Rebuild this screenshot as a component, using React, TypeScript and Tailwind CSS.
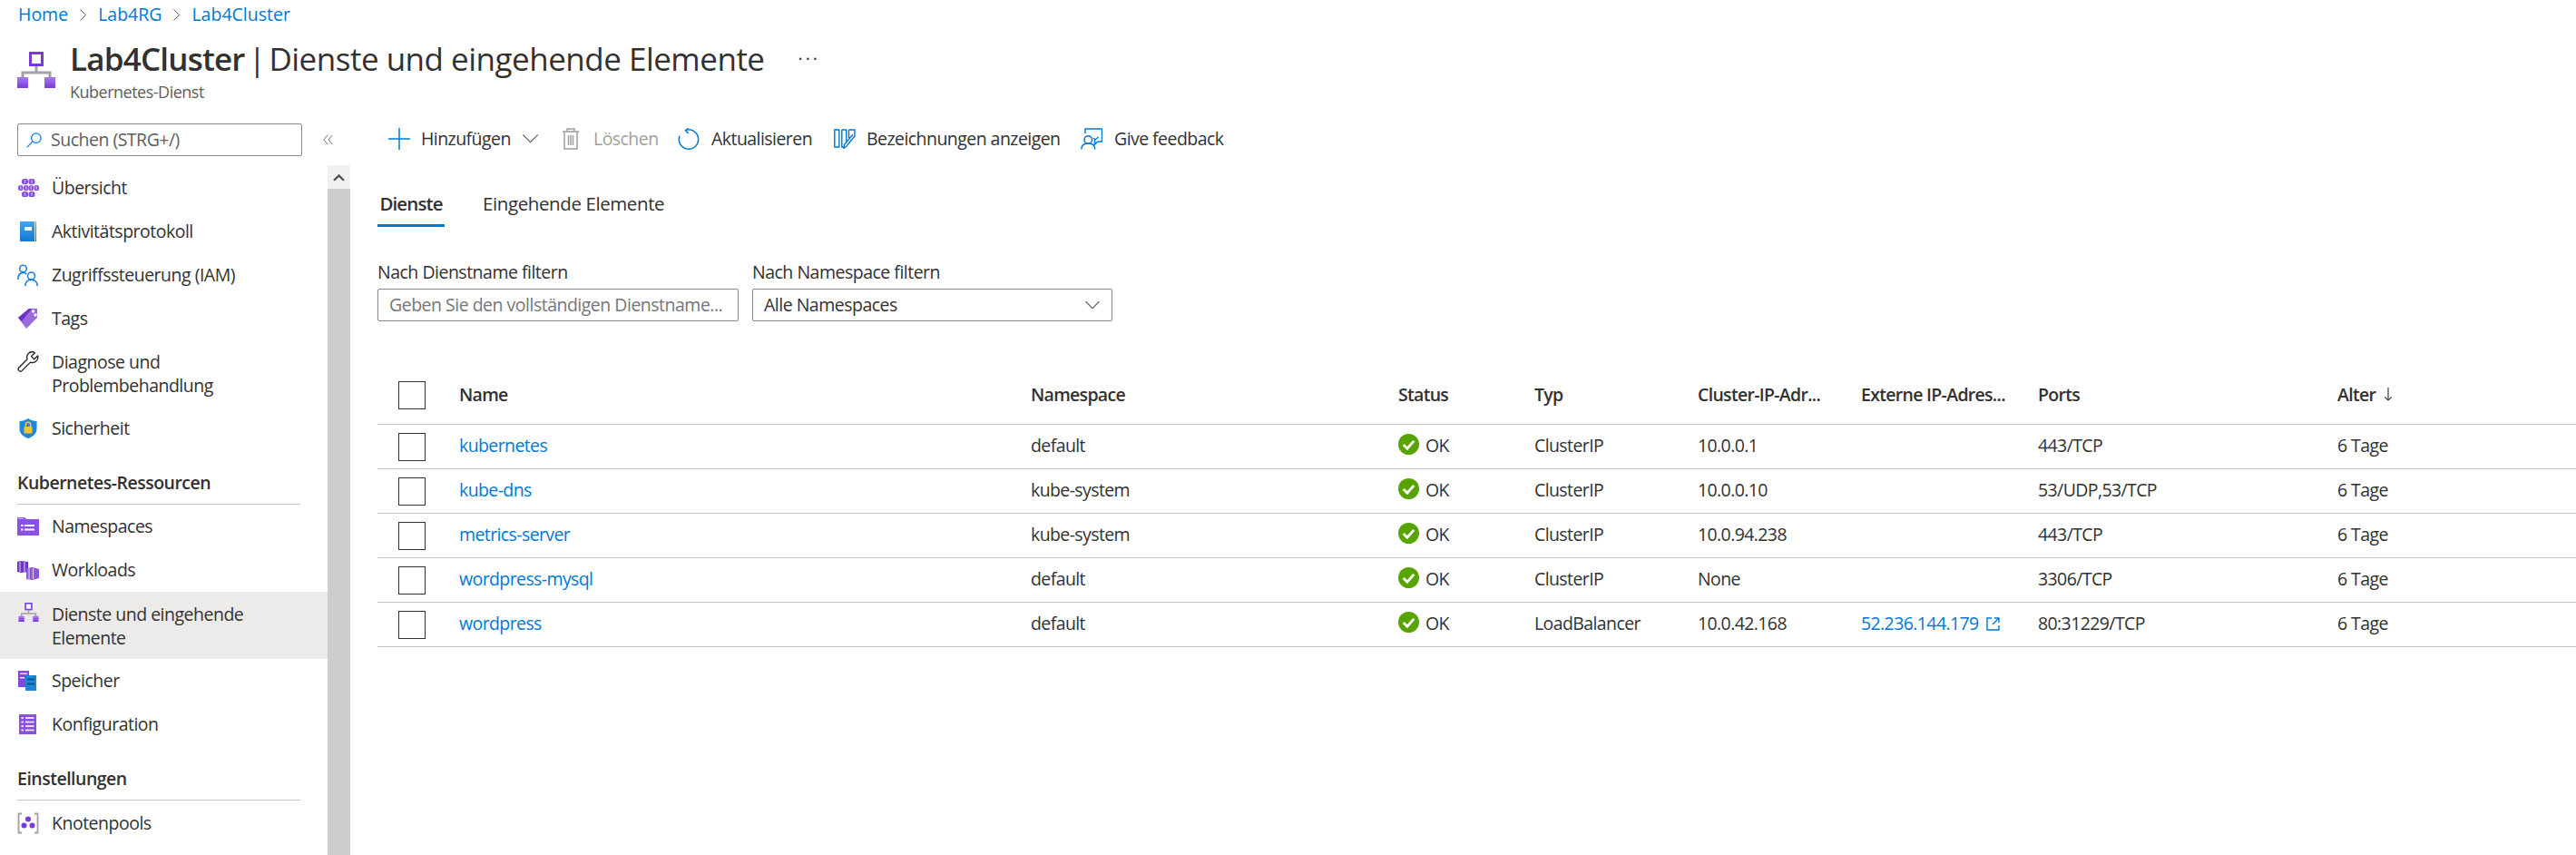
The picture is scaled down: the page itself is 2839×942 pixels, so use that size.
import React from "react";

const Icon = ({ children, cls = "w-[24px] h-[24px]" }: { children: React.ReactNode; cls?: string }) => (
  <svg viewBox="0 0 24 24" className={cls + " shrink-0"} fill="none">{children}</svg>
);

const NetIcon = ({ big, id }: { big?: boolean; id: string }) => (
  <svg viewBox="0 0 42 40" className={big ? "w-[42px] h-[40px] shrink-0" : "w-[23px] h-[21px] shrink-0"} fill="none">
    <defs>
      <linearGradient id={id} x1="0" y1="0" x2="0" y2="1">
        <stop offset="0" stopColor="#a67af4" />
        <stop offset="1" stopColor="#773adc" />
      </linearGradient>
    </defs>
    <path d="M21 16v7M6 29v-6h30v6" stroke="#a3a3a3" strokeWidth="3" />
    <rect x="14.5" y="1.5" width="13" height="13" stroke="#773adc" strokeWidth="3" fill="#fff" />
    <rect x="0" y="28" width="12" height="12" fill={`url(#${id})`} />
    <rect x="30" y="28" width="12" height="12" fill={`url(#${id})`} />
  </svg>
);

const Overview = () => (
  <svg viewBox="0 0 23 20" className="w-[23px] h-[20px] shrink-0">
    {[[4, 0, 7], [11.5, 0, 7], [0, 7, 5.5], [6, 7, 5.5], [11.5, 7, 5.5], [17.5, 7, 5.5], [4, 14, 7], [11.5, 14, 7]].map(([x, y, w], i) => (
      <g key={i}>
        <rect x={x} y={y} width={w} height="6" rx="2.6" fill="#8a4de0" />
        <rect x={x + w / 2 - 0.7} y={y + 1.2} width="1.4" height="3.6" fill="#c9adf2" />
      </g>
    ))}
  </svg>
);
const Book = () => (
  <svg viewBox="0 0 18 22" className="w-[18px] h-[22px] shrink-0">
    <defs>
      <linearGradient id="bk" x1="0" y1="0" x2="0" y2="1">
        <stop offset="0" stopColor="#45a2ee" />
        <stop offset="1" stopColor="#1478d2" />
      </linearGradient>
    </defs>
    <path d="M1 0h16a1 1 0 0 1 1 1v21H1a1 1 0 0 1-1-1V1a1 1 0 0 1 1-1Z" fill="url(#bk)" />
    <rect x="16" y="0" width="1" height="22" fill="#fff" opacity=".8" />
    <rect x="5" y="6" width="8" height="4" fill="#f2f8fe" />
  </svg>
);
const Iam = () => (
  <Icon>
    <circle cx="6.5" cy="5" r="3.8" stroke="#1b7fd6" strokeWidth="1.6" />
    <path d="M.8 17c0-5 2.5-7.500 5.700-7.500 1.600 0 2.900.5 3.800 1.500" stroke="#1b7fd6" strokeWidth="1.6" />
    <circle cx="15.5" cy="13" r="4" stroke="#1b7fd6" strokeWidth="1.6" />
    <path d="M8.800 24c0-4 2.500-6.800 6.700-6.800s6.700 2.800 6.700 6.800" stroke="#1b7fd6" strokeWidth="1.6" />
  </Icon>
);
const Tag = () => (
  <Icon>
    <path d="M1 11 L13 1 h9 v10 L10 23 Z" fill="#9a6cdb" />
    <path d="M1 11 L13 1 h3 L5 15 Z" fill="#6d31c9" />
    <circle cx="17.5" cy="4" r="1.7" fill="#fff" />
    <circle cx="20" cy="8" r="1.7" fill="#fff" />
  </Icon>
);
const Wrench = () => (
  <Icon>
    <path d="M16.500 1.500a6 6 0 0 0-5.400 8.200L1.900 19a2.400 2.400 0 0 0 3.400 3.400l9.200-9.300A6 6 0 0 0 22.600 6l-3.900 3.800-3.200-3.200 3.800-3.900a6 6 0 0 0-2.800-1.200Z" stroke="#1f1f1f" strokeWidth="1.3" strokeLinejoin="round" />
  </Icon>
);
const Shield = () => (
  <Icon>
    <path d="M12 1c3 2 6 2.800 9.500 3v8.500c0 5-4 8.500-9.500 10.500C6.500 21 2.500 17.500 2.500 12.500V4C6 3.800 9 3 12 1Z" fill="#1f87dd" />
    <rect x="7.5" y="10" width="9" height="7.5" rx="1" fill="#f8c52b" />
    <path d="M9.300 10V8a2.700 2.700 0 0 1 5.400 0v2" stroke="#f8c52b" strokeWidth="1.5" />
  </Icon>
);
const Folder = () => (
  <Icon>
    <path d="M0 2h8l2 2h14v18H0Z" fill="#8a50e3" />
    <rect x="1" y="2.8" width="6" height="1.2" fill="#c9adf2" />
    <rect x="4" y="10" width="2.5" height="2" fill="#fff" />
    <rect x="8" y="10" width="11" height="2" fill="#fff" />
    <rect x="4" y="14.5" width="2.5" height="2" fill="#fff" />
    <rect x="8" y="14.5" width="11" height="2" fill="#fff" />
  </Icon>
);
const Workloads = () => (
  <Icon>
    <path d="M0 3l4-1 8 1v11l-8 1-4-1Z" fill="#6e35c4" />
    <path d="M3 3v11M8 3v11" stroke="#e6daf8" strokeWidth="1" />
    <path d="M10 10l7-1 7 2v10l-7 2-7-1Z" fill="#8c56de" />
    <path d="M13 10v12M17.500 10v12" stroke="#e6daf8" strokeWidth="1" />
  </Icon>
);
const Storage = () => (
  <Icon>
    <rect x="1" y="1" width="12" height="18" fill="#8048dc" />
    <rect x="3" y="3.5" width="8" height="1.5" fill="#e6daf8" />
    <rect x="3" y="8" width="5" height="1.5" fill="#e6daf8" />
    <rect x="9" y="6" width="12" height="17" fill="#1b84dc" />
    <rect x="11" y="9.5" width="8" height="2" fill="#0b4f8c" />
    <rect x="11" y="14.5" width="8" height="2" fill="#0b4f8c" />
  </Icon>
);
const Config = () => (
  <Icon>
    <rect x="2" y="1" width="19" height="22" fill="#8a50e3" />
    {[5, 9.5, 14, 18.5].map((y) => (
      <g key={y}>
        <rect x="4.5" y={y - 0.8} width="2.5" height="1.6" fill="#fff" />
        <rect x="9" y={y - 0.8} width="9.5" height="1.6" fill="#fff" />
      </g>
    ))}
  </Icon>
);
const Pools = () => (
  <Icon>
    <path d="M5 1.500H1.500v21H5M19 1.500h3.500v21H19" stroke="#a0a0a0" strokeWidth="1.8" />
    <circle cx="12" cy="7.5" r="3" fill="#773adc" />
    <circle cx="7.5" cy="14.5" r="3" fill="#773adc" />
    <circle cx="16.5" cy="14.5" r="3" fill="#773adc" />
  </Icon>
);

const Side = ({ icon, lines, active }: { icon: React.ReactNode; lines: string[]; active?: boolean }) => (
  <div className={"flex gap-[14px] pl-[19px] pr-[10px] " + (lines.length > 1 ? (active ? "pt-[12px] pb-[10px] " : "pt-[11px] pb-[10px] ") : "h-[48px] items-center ") + (active ? "bg-[#edebe9]" : "")}>
    <div className="w-[24px] flex justify-center">{icon}</div>
    <div className="leading-[26px]">
      {lines.map((l) => (
        <div key={l}>{l}</div>
      ))}
    </div>
  </div>
);

const Head = ({ label }: { label: string }) => (
  <div className="ml-[19px] w-[312px] h-[60px] pt-[23px] leading-[26px] font-semibold border-b border-[#c8c6c4]">{label}</div>
);

const Check = () => <div className="w-[30px] h-[31px] ml-[23px] mt-[2px] border-[1.5px] border-[#323130] bg-white" />;

const Chevron = ({ cls }: { cls: string }) => (
  <svg viewBox="0 0 20 12" className={cls + " shrink-0"} fill="none">
    <path d="M1 1.500l9 9 9-9" stroke="#605e5c" strokeWidth="1.3" />
  </svg>
);

const Crumb = () => (
  <svg viewBox="0 0 12 20" className="w-[9px] h-[15px] mx-[12px]" fill="none">
    <path d="M2 2l8 8-8 8" stroke="#605e5c" strokeWidth="1.3" />
  </svg>
);

const rows = [
  ["kubernetes", "default", "ClusterIP", "10.0.0.1", "", "443/TCP"],
  ["kube-dns", "kube-system", "ClusterIP", "10.0.0.10", "", "53/UDP,53/TCP"],
  ["metrics-server", "kube-system", "ClusterIP", "10.0.94.238", "", "443/TCP"],
  ["wordpress-mysql", "default", "ClusterIP", "None", "", "3306/TCP"],
  ["wordpress", "default", "LoadBalancer", "10.0.42.168", "52.236.144.179", "80:31229/TCP"],
];

const gridCls = "grid grid-cols-[90px_630px_405px_150px_180px_180px_195px_330px_1fr] items-center border-b border-[#c8c6c4] ml-[30px] pb-[2px]";

export default function App() {
  return (
    <div className="w-[2839px] h-[942px] overflow-hidden bg-white text-[#323130] text-[19.5px] font-['Open_Sans','Noto_Sans',sans-serif] tracking-[-0.5px]">
      <div className="h-[32px] pl-[20px] flex items-center text-[#0078d4] leading-[26px] tracking-[0px]">
        <span>Home</span>
        <Crumb />
        <span>Lab4RG</span>
        <Crumb />
        <span>Lab4Cluster</span>
      </div>
      <div className="h-[104px] flex pl-[19px] pt-[15px]">
        <div className="w-[58px] pt-[10px]">
          <NetIcon big id="nb" />
        </div>
        <div className="flex flex-col">
          <div className="flex items-center h-[36px] text-[35px] leading-[36px] tracking-[-0.5px]">
            <span className="font-semibold tracking-[-0.8px]">Lab4Cluster</span>
            <span className="mx-[4px]">|</span>
            <span>Dienste und eingehende Elemente</span>
            <span className="ml-[37px] text-[19.5px] tracking-[3px]">···</span>
          </div>
          <div className="text-[18px] leading-[22px] mt-[7px] text-[#605e5c]">Kubernetes-Dienst</div>
        </div>
      </div>
      <div className="flex h-[806px]">
        <div className="w-[386px] shrink-0 flex flex-col">
          <div className="h-[46px] flex items-start">
            <div className="ml-[19px] w-[314px] h-[36px] border border-[#8a8886] rounded-[2px] flex items-center pl-[8px] gap-[9px] text-[#605e5c]">
              <svg viewBox="0 0 20 20" className="w-[19px] h-[19px]" fill="none">
                <circle cx="12.5" cy="7.5" r="5.5" stroke="#0078d4" strokeWidth="1.3" />
                <path d="M8.500 11.500L2 18" stroke="#0078d4" strokeWidth="1.3" />
              </svg>
              Suchen (STRG+/)
            </div>
            <svg viewBox="0 0 14 16" className="w-[12px] h-[14px] ml-[23px] mt-[11px]" fill="none">
              <path d="M6 2L1 8l5 6M12 2L7 8l5 6" stroke="#605e5c" strokeWidth="1" />
            </svg>
          </div>
          <div className="flex flex-1 min-h-0">
            <div className="w-[361px] shrink-0 pt-[1px]">
              <Side icon={<Overview />} lines={["Übersicht"]} />
              <Side icon={<Book />} lines={["Aktivitätsprotokoll"]} />
              <Side icon={<Iam />} lines={["Zugriffssteuerung (IAM)"]} />
              <Side icon={<Tag />} lines={["Tags"]} />
              <Side icon={<Wrench />} lines={["Diagnose und", "Problembehandlung"]} />
              <Side icon={<Shield />} lines={["Sicherheit"]} />
              <Head label="Kubernetes-Ressourcen" />
              <Side icon={<Folder />} lines={["Namespaces"]} />
              <Side icon={<Workloads />} lines={["Workloads"]} />
              <Side icon={<NetIcon id="ns" />} lines={["Dienste und eingehende", "Elemente"]} active />
              <Side icon={<Storage />} lines={["Speicher"]} />
              <Side icon={<Config />} lines={["Konfiguration"]} />
              <Head label="Einstellungen" />
              <div className="pt-[1px]">
                <Side icon={<Pools />} lines={["Knotenpools"]} />
              </div>
            </div>
            <div className="w-[25px] flex flex-col bg-[#cdcdcd]">
              <div className="h-[26px] bg-[#f0f0f0] flex items-center justify-center">
                <svg viewBox="0 0 12 8" className="w-[13px] h-[9px]">
                  <path d="M1 7l5-5 5 5" stroke="#505050" strokeWidth="2.2" fill="none" />
                </svg>
              </div>
            </div>
          </div>
        </div>

        <div className="flex-1 min-w-0 flex flex-col">
          <div className="h-[34px] flex items-center pl-[42px] whitespace-nowrap tracking-[-0.55px]">
            <svg viewBox="0 0 24 24" className="w-[24px] h-[24px] shrink-0" fill="none">
              <path d="M12 0v24M0 12h24" stroke="#0078d4" strokeWidth="1.5" />
            </svg>
            <span className="ml-[12px] w-[99px]">Hinzufügen</span>
            <Chevron cls="w-[19px] h-[11px] ml-[12px] -mt-[2px]" />
            <svg viewBox="0 0 20 24" className="w-[20px] h-[24px] ml-[25px] shrink-0" fill="none">
              <path d="M1 4h18M6 4V1h8v3M3 4v19h14V4M7.500 8v11M10 8v11M12.500 8v11" stroke="#a19f9d" strokeWidth="1.5" />
            </svg>
            <span className="ml-[15px] w-[69px] text-[#a19f9d]">Löschen</span>
            <svg viewBox="0 0 24 24" className="w-[24px] h-[24px] ml-[24px] shrink-0" fill="none">
              <path d="M2 8.600A10.700 10.700 0 1 0 8.500 2.400M12 .6 8.500 2.400l3 3.600" stroke="#0078d4" strokeWidth="1.5" />
            </svg>
            <span className="ml-[13px] w-[109px]">Aktualisieren</span>
            <svg viewBox="0 0 24 22" className="w-[24px] h-[22px] ml-[26px] shrink-0" fill="none">
              <path d="M.8 1h5v19h-5ZM8.800 1h5v15M8.800 1v19h3M16.500 1h6.500v7l-9 11-3 2.300.5-4 9.500-11M16.500 1v9" stroke="#0078d4" strokeWidth="1.4" />
            </svg>
            <span className="ml-[12px] w-[212px]">Bezeichnungen anzeigen</span>
            <svg viewBox="0 0 24 24" className="w-[24px] h-[24px] ml-[24px] shrink-0" fill="none">
              <circle cx="8.3" cy="13" r="4.3" stroke="#0078d4" strokeWidth="1.5" />
              <path d="M.8 23.500c0-4.500 3-6.500 7.500-6.500s7.500 2 7.500 6.500M5 6V1h18.500v14H19l-3.500 3v-6M14 11l2 2 3.500-3" stroke="#0078d4" strokeWidth="1.5" />
            </svg>
            <span className="ml-[13px]">Give feedback</span>
          </div>

          <div className="flex ml-[30px] mt-[41px] leading-[26px] text-[20.5px] tracking-[-0.4px]">
            <div className="w-[74px] pb-[10px] border-b-[3px] border-[#0078d4] text-center font-semibold tracking-[-0.9px]">Dienste</div>
            <div className="ml-[42px]">Eingehende Elemente</div>
          </div>

          <div className="flex ml-[30px] mt-[37px]">
            <div className="w-[398px]">
              <div className="leading-[26px]">Nach Dienstname filtern</div>
              <div className="mt-[5px] h-[36px] border border-[#8a8886] rounded-[2px] flex items-center pl-[12px] text-[#767676] whitespace-nowrap">Geben Sie den vollständigen Dienstname...</div>
            </div>
            <div className="w-[397px] ml-[15px]">
              <div className="leading-[26px]">Nach Namespace filtern</div>
              <div className="mt-[5px] h-[36px] border border-[#8a8886] rounded-[2px] flex items-center justify-between pl-[12px] pr-[12px]">
                Alle Namespaces
                <Chevron cls="w-[18px] h-[10px]" />
              </div>
            </div>
          </div>

          <div className={gridCls + " h-[65px] mt-[49px] pt-[1px] font-semibold tracking-[-0.7px]"}>
            <Check />
            <div>Name</div>
            <div>Namespace</div>
            <div>Status</div>
            <div>Typ</div>
            <div>Cluster-IP-Adr...</div>
            <div>Externe IP-Adres...</div>
            <div>Ports</div>
            <div className="flex items-center gap-[9px]">
              Alter
              <svg viewBox="0 0 10 16" className="w-[10px] h-[15px]" fill="none">
                <path d="M5 0v15M1 11l4 4 4-4" stroke="#323130" strokeWidth="1.2" />
              </svg>
            </div>
          </div>
          {rows.map((r) => (
            <div key={r[0]} className={gridCls + " h-[49px] tracking-[-0.6px]"}>
              <Check />
              <div className="text-[#0078d4]">{r[0]}</div>
              <div>{r[1]}</div>
              <div className="flex items-center gap-[7px]">
                <svg viewBox="0 0 22 22" className="w-[23px] h-[23px] -mt-[4px]">
                  <circle cx="11" cy="11" r="11" fill="#57a300" />
                  <path d="M5.500 11.500l4 4 7-8" stroke="#fff" strokeWidth="2.8" fill="none" />
                </svg>
                OK
              </div>
              <div>{r[2]}</div>
              <div>{r[3]}</div>
              <div className="flex items-center gap-[8px] text-[#0078d4]">
                {r[4]}
                {r[4] && (
                  <svg viewBox="0 0 15 15" className="w-[15px] h-[15px]" fill="none">
                    <path d="M6 1H1v13h13V9M9 1h5v5M14 1L7 8" stroke="#0078d4" strokeWidth="1.4" />
                  </svg>
                )}
              </div>
              <div>{r[5]}</div>
              <div>6 Tage</div>
            </div>
          ))}
        </div>
      </div>
    </div>
  );
}
